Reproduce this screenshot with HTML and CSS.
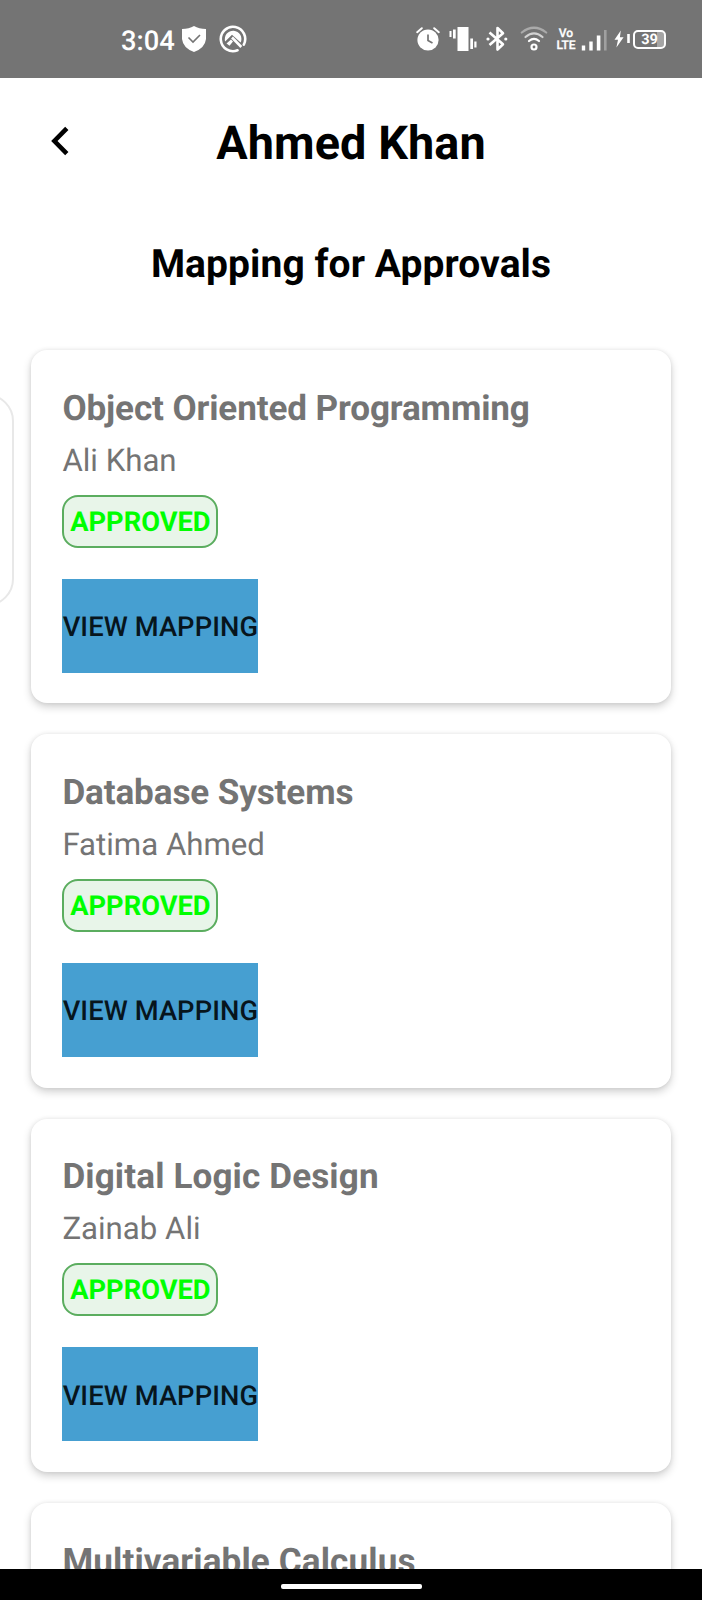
FILE: index.html
```html
<!DOCTYPE html>
<html lang="en">
<head>
<meta charset="utf-8">
<title>Mapping for Approvals</title>
<link rel="stylesheet" href="styles.css">
</head>
<body>
<div class="screen">
  <header class="status">
    <span class="clock">3:04</span>
    <svg class="shield" width="26" height="28" viewBox="0 0 26 28"><path d="M13 1Q18 4 25 4V14Q24 23 13 27Q2 23 1 14V4Q8 4 13 1Z" fill="#fff"/><path d="M7.5 12.5L12 17L19 10" fill="none" stroke="#747474" stroke-width="1.6"/></svg>
    <svg class="ring" width="28" height="30" viewBox="0 0 28 30"><path d="M18.5 26.3A12.2 12.2 0 1 1 24.8 20.6" fill="none" stroke="#fff" stroke-width="2.6" stroke-linecap="round"/><path d="M6.2 17.5A8.3 8.3 0 1 1 21.6 18.6L13 10.8Z" fill="#fff"/><path d="M7.5 19.5L12 15.5L14 17.5L10.5 21.8Z" fill="#fff"/><path d="M13 13.5L22.3 23" stroke="#fff" stroke-width="2.6"/></svg>
    <span class="spacer"></span>
    <svg class="alarm" width="24" height="24" viewBox="0 0 24 24"><circle cx="12" cy="13" r="10.6" fill="#fff"/><path d="M1.2 5.2L5.8 1.2M18.2 1.2L22.8 5.2" stroke="#fff" stroke-width="2" stroke-linecap="round"/><path d="M12 7.5V13.5L16.5 16" fill="none" stroke="#747474" stroke-width="1.7"/></svg>
    <svg class="vibrate" width="28" height="26" viewBox="0 0 28 26"><path d="M8.5 1H19.5V25H8.5ZM4 3.5H6.7V12.5H4ZM.5 5H2.5V11H.5ZM21.3 12.5H24V23H21.3ZM25.3 15.5H27.5V21.5H25.3Z" fill="#fff"/></svg>
    <svg class="bluetooth" width="22" height="26" viewBox="0 0 22 26"><path d="M3.5 6.5L17 18.2L11.5 23.5V2L17 7.3L3.5 19" fill="none" stroke="#fff" stroke-width="2.6" stroke-linejoin="round"/><circle cx="2" cy="13" r="1.6" fill="#fff"/><circle cx="19.8" cy="13" r="1.6" fill="#fff"/></svg>
    <svg class="wifi" width="28" height="26" viewBox="0 0 28 26"><g fill="none" stroke="#fff" stroke-width="2.2" stroke-linecap="round"><path d="M1.8 6.5Q14-3 26.2 6.5" stroke="#aaa"/><path d="M5.5 11Q14 3.8 22.5 11" stroke="#d2d2d2"/><path d="M9 15Q14 10.7 19 15"/><circle cx="14" cy="21" r="2.5"/></g></svg>
    <span class="volte"><span>Vo</span><span>LTE</span></span>
    <svg class="signal" width="26" height="22" viewBox="0 0 26 22"><path d="M.8 16.5H4.2V21.5H.8ZM8.3 12.5H11.7V21.5H8.3ZM15.8 6.5H19.4V21.5H15.8Z" fill="#fff"/><path d="M23 1H25.6V21.5H23Z" fill="#a0a0a0"/></svg>
    <svg class="bolt" width="17" height="18" viewBox="0 0 17 18"><path d="M6.8.5L.5 9.8H4L2.4 17.5L9.6 7.2H5.9Z" fill="#fff"/><path d="M13.2 4H15.8V13H13.2Z" fill="#fff"/></svg>
    <span class="battery">39</span>
  </header>
  <main class="content">
    <div class="topbar">
      <svg class="back" width="18" height="30" viewBox="0 0 18 30"><path d="M15.8 2.4L3.4 15L15.8 27.6" fill="none" stroke="#000" stroke-width="4.6"/></svg>
      <h1>Ahmed Khan</h1>
    </div>
    <h2>Mapping for Approvals</h2>
    <section class="cards">
      <article class="card"><h3 class="snug">Object Oriented Programming</h3><p>Ali Khan</p><span class="badge">APPROVED</span><button>VIEW MAPPING</button></article>
      <article class="card"><h3 class="snug">Database Systems</h3><p>Fatima Ahmed</p><span class="badge">APPROVED</span><button>VIEW MAPPING</button></article>
      <article class="card"><h3 class="loose">Digital Logic Design</h3><p>Zainab Ali</p><span class="badge">APPROVED</span><button>VIEW MAPPING</button></article>
      <article class="card"><h3 class="loose">Multivariable Calculus</h3></article>
    </section>
  </main>
  <div class="edge-handle"></div>
  <footer class="nav"><span class="pill"></span></footer>
</div>
</body>
</html>
```
FILE: styles.css
```css
* { box-sizing: border-box; }
body { margin: 0; font-family: Roboto, sans-serif; background: #fff; text-rendering: geometricPrecision; }
h1, h2, h3, p { margin: 0; }
svg { display: block; flex: none; }

.screen { position: relative; display: flex; flex-direction: column; width: 702px; height: 1600px; overflow: hidden; }

.status { flex: none; display: flex; align-items: center; height: 78px; padding: 0 36px 0 121px; background: #747474; color: #fff; }
.clock { width: 60px; font-size: 27.3px; font-weight: 500; line-height: 32px; margin-top: 3px; white-space: nowrap; }
.ring { margin-left: 12px; }
.spacer { flex: 1; }
.vibrate { margin-left: 9px; }
.bluetooth { margin-left: 9px; }
.wifi { margin-left: 12px; }
.volte { display: flex; flex-direction: column; align-items: center; width: 22px; margin-left: 7px; font-size: 12px; font-weight: 500; line-height: 12px; }
.volte span { -webkit-text-stroke: .3px #fff; }
.signal { margin: 2px 0 0 4px; }
.bolt { margin-left: 7px; }
.battery { width: 33px; height: 19px; margin-left: 2px; border: 2px solid #fff; border-radius: 5px; background: linear-gradient(90deg, #747474 75%, #a5a5a5 75%); font-size: 14.5px; font-weight: 700; line-height: 16px; text-align: center; }

.content { flex: 1; min-height: 0; overflow: hidden; }
.topbar { display: grid; grid-template-columns: 50px 1fr 50px; align-items: center; height: 130px; }
.back { margin-left: 50.5px; margin-bottom: 5px; }
h1 { padding-top: 2px; font-size: 46.8px; line-height: 56px; letter-spacing: .1px; text-align: center; white-space: nowrap; }
h2 { height: 112px; font-size: 39px; line-height: 113px; letter-spacing: .08px; text-align: center; }

.cards { display: flex; flex-direction: column; gap: 31.2px; padding: 30px 31px 0; }
.card { display: flex; flex-direction: column; align-items: flex-start; flex: none; height: 353.2px; padding: 32.6px 31.4px 0; border-radius: 16px; background: #fff; box-shadow: 0 4px 8px rgba(0,0,0,.18), 0 0 4px rgba(0,0,0,.08); color: #747474; }
h3 { font-size: 35.1px; line-height: 51px; white-space: nowrap; }
.snug { letter-spacing: -.12px; }
.loose { letter-spacing: .12px; }
p { font-size: 31.2px; line-height: 53px; }
.badge { width: 156px; height: 53px; margin-top: 8px; border: 2px solid #5bad5f; border-radius: 16px; background: #e8f5e9; color: #0f0; font-size: 27.3px; font-weight: 700; line-height: 51px; text-align: center; }
button { width: 196px; height: 94px; margin: 31px 0 0; padding: 3px 0 0; border: 0; background: #469fd1; color: #07151d; font: 500 27.3px/32px Roboto, sans-serif; letter-spacing: .1px; text-rendering: inherit; white-space: nowrap; }

.edge-handle { position: absolute; left: -40px; top: 394px; width: 54px; height: 212px; border: 2px solid #e8e8e8; border-radius: 27px; background: #fff; }

.nav { flex: none; display: flex; justify-content: center; height: 31px; padding-top: 15px; background: #000; }
.pill { width: 141px; height: 5px; border-radius: 2px; background: #fff; }
```
